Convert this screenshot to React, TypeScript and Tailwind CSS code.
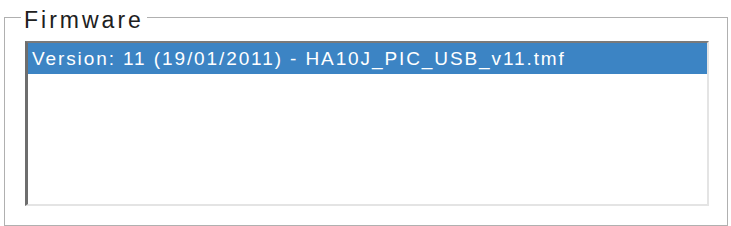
import React from "react";

export default function App() {
  return (
    <div className="w-[731px] h-[226px] bg-white pt-[17px] pl-[4px] overflow-hidden" style={{ fontFamily: '"Liberation Sans", Arial, sans-serif' }}>
      <div className="relative w-[724px] h-[209px] border border-[#b0b0b0]">
        <span className="absolute left-[16px] top-[-11px] px-[3px] bg-white text-[23px] leading-[26px] tracking-[3px] text-[#202020]">
          Firmware
        </span>
        <div className="mt-[23px] ml-[20px] w-[684px] h-[165px] bg-white border-t-2 border-l-[3px] border-t-[#7a7a7a] border-l-[#6e6e6e] border-b-2 border-r-2 border-b-[#e4e4e4] border-r-[#e4e4e4]">
          <div className="h-[31px] bg-[#3c84c4] text-white text-[19px] leading-[32px] pl-[4px] tracking-[1.9px] whitespace-nowrap">
            Version: 11 (19/01/2011) - HA10J_PIC_USB_v11.tmf
          </div>
        </div>
      </div>
    </div>
  );
}
